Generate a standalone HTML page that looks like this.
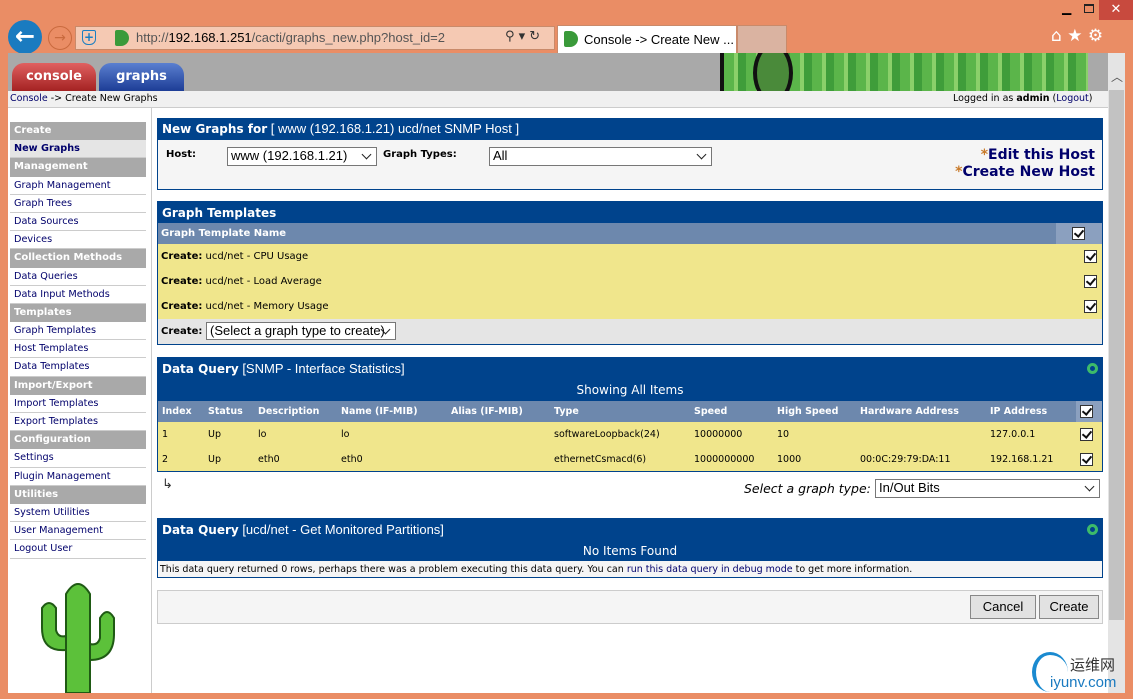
<!DOCTYPE html>
<html><head><meta charset="utf-8"><style>
*{margin:0;padding:0;box-sizing:border-box}
body{width:1133px;height:699px;overflow:hidden;background:#ea8d65;font-family:"DejaVu Sans","Liberation Sans",sans-serif;font-size:10px;color:#000;position:relative}
.a{position:absolute!important}
.t{white-space:nowrap}
.hd{background:#00438c;color:#fff;font-family:"Liberation Sans",sans-serif;font-size:13px;padding:3px 4px}
.hd b{font-family:"DejaVu Sans",sans-serif;font-size:12px}
.sb div{height:18.2px;line-height:18px;padding-left:4px;border-bottom:1px solid #ccc;color:#00006b;font-size:9.7px}
.sb .h{background:#a9a9a9;color:#fff;font-weight:bold;border-bottom:none;font-size:10px}
.cb{width:13px;height:13px;border:1px solid #333;background:#fff;position:relative}
.cb:after{content:"";position:absolute;left:3px;top:0px;width:4px;height:7px;border-right:2px solid #111;border-bottom:2px solid #111;transform:rotate(40deg)}
.sel{background:#fff;border:1px solid #777;font-family:"Liberation Sans",sans-serif;font-size:13px;padding-left:3px;line-height:16px}
.sel:after{content:"";position:absolute;right:6px;top:3px;width:6px;height:6px;border-right:1.5px solid #222;border-bottom:1.5px solid #222;transform:rotate(45deg)}
table{border-collapse:collapse;width:100%}
td{padding:0 4px;font-size:9.5px;white-space:nowrap}
</style></head><body>
<div class="a t" style="left:1062px;top:1px;font-size:12px">▁</div>
<div class="a" style="left:1084px;top:4px;width:10px;height:9px;border:1.5px solid #222;border-top-width:2px"></div>
<div class="a" style="left:1099px;top:0;width:34px;height:20px;background:#c84a3e;color:#fff;text-align:center;font-size:13px;line-height:19px">✕</div>
<div class="a" style="left:8px;top:20px;width:34px;height:34px;border-radius:50%;background:#1a7bc0;color:#fff;font-size:24px;line-height:32px;text-align:center;font-weight:bold">←</div>
<div class="a" style="left:48px;top:26px;width:24px;height:24px;border-radius:50%;border:1px solid #c96a3e;color:#c96a3e;font-size:14px;line-height:22px;text-align:center">→</div>
<div class="a" style="left:75px;top:26px;width:480px;height:24px;background:#f5c9b3;border:1px solid #c98a6a"></div>
<div class="a" style="left:82px;top:30px;width:14px;height:15px;border:1.5px solid #1b7fc2;border-radius:2px 2px 6px 6px;color:#1b7fc2;font-size:12px;line-height:12px;text-align:center;font-weight:bold">+</div>
<div class="a" style="left:115px;top:30px;width:14px;height:16px;background:#3a9a3a;border-radius:2px 8px 8px 2px"></div>
<div class="a t" style="left:136px;top:30px;font-family:'Liberation Sans',sans-serif;font-size:13px;color:#555">http://<span style="color:#000">192.168.1.251</span>/cacti/graphs_new.php?host_id=2</div>
<div class="a t" style="left:505px;top:29px;font-size:13px;color:#333">⚲ ▾ ↻</div>
<div class="a" style="left:557px;top:25px;width:180px;height:28px;background:#fff;border:1px solid #c98a6a;border-bottom:none"></div>
<div class="a" style="left:564px;top:31px;width:14px;height:16px;background:#3a9a3a;border-radius:2px 8px 8px 2px"></div>
<div class="a t" style="left:584px;top:32px;font-family:'Liberation Sans',sans-serif;font-size:13px">Console -&gt; Create New ...&nbsp; <span style="color:#888">✕</span></div>
<div class="a" style="left:737px;top:25px;width:50px;height:28px;background:#dab3a1;border:1px solid #c98a6a;border-bottom:none"></div>
<div class="a t" style="left:1051px;top:26px;font-size:17px;color:#fff">⌂ ★ ⚙</div>
<div class="a" style="left:8px;top:53px;width:1100px;height:640px;background:#fff"></div>
<div class="a" style="left:8px;top:53px;width:1100px;height:38px;background:#a9a9a9;overflow:hidden">
 <div class="a" style="left:712px;top:-20px;width:398px;height:80px;background:repeating-linear-gradient(90deg,#5bb54a 0 10px,#8bd06a 10px 14px,#3f9d3a 14px 22px);border-left:4px solid #111"></div>
 <div class="a" style="left:745px;top:-10px;width:40px;height:60px;border:4px solid #111;border-radius:50%;background:#4a8a3a"></div>
 <div class="a" style="left:1080px;top:0;width:20px;height:38px;background:#a9a9a9"></div>
</div>
<div class="a" style="left:12px;top:63px;width:84px;height:28px;border-radius:12px 12px 0 0;background:linear-gradient(#e06060,#a42222);color:#fff;font-weight:bold;font-size:13px;text-align:center;line-height:28px">console</div>
<div class="a" style="left:99px;top:63px;width:85px;height:28px;border-radius:12px 12px 0 0;background:linear-gradient(#5a7fd0,#1d3d96);color:#fff;font-weight:bold;font-size:13px;text-align:center;line-height:28px">graphs</div>
<div class="a" style="left:1108px;top:53px;width:17px;height:640px;background:#e4e4e4"></div>
<div class="a" style="left:1109px;top:90px;width:15px;height:530px;background:#c2c2c2"></div>
<div class="a" style="left:1111px;top:68px;font-size:12px;color:#555">︿</div>
<div class="a" style="left:8px;top:91px;width:1100px;height:17px;background:#f0f0f0;border-bottom:1px solid #ccc"></div>
<div class="a t" style="left:10px;top:93px;font-size:9.5px"><span style="color:#00006b">Console</span> -&gt; Create New Graphs</div>
<div class="a t" style="left:953px;top:93px;font-size:9.5px">Logged in as <b>admin</b> (<span style="color:#00006b">Logout</span>)</div>
<div class="a" style="left:151px;top:108px;width:1px;height:585px;background:#ccc"></div>
<div class="a sb" style="left:10px;top:122px;width:136px">
<div class="h">Create</div><div style="background:#e5e5e5;font-weight:bold">New Graphs</div>
<div class="h">Management</div><div>Graph Management</div><div>Graph Trees</div><div>Data Sources</div><div>Devices</div>
<div class="h">Collection Methods</div><div>Data Queries</div><div>Data Input Methods</div>
<div class="h">Templates</div><div>Graph Templates</div><div>Host Templates</div><div>Data Templates</div>
<div class="h">Import/Export</div><div>Import Templates</div><div>Export Templates</div>
<div class="h">Configuration</div><div>Settings</div><div>Plugin Management</div>
<div class="h">Utilities</div><div>System Utilities</div><div>User Management</div><div>Logout User</div>
</div>
<svg class="a" style="left:38px;top:578px" width="82" height="115" viewBox="0 0 82 115">
<g fill="#5cc13a" stroke="#1f5a14" stroke-width="2">
<path d="M28 115 V16 Q40 -4 52 16 V115Z"/>
<path d="M28 72 Q4 74 4 50 V30 Q11 20 18 30 V52 Q20 60 28 58Z"/>
<path d="M52 82 Q76 82 76 56 V40 Q69 28 62 40 V60 Q60 68 52 66Z"/>
</g></svg>
<div class="a" style="left:157px;top:118px;width:946px;height:72px;border:1px solid #00438c;background:#f5f5f5">
 <div class="hd t" style="height:21px;padding-top:2px"><b>New Graphs for</b> [ www (192.168.1.21) ucd/net SNMP Host ]</div>
 <div class="a t" style="left:8px;top:30px;font-weight:bold">Host:</div>
 <div class="a sel" style="left:69px;top:28px;width:150px;height:19px">www (192.168.1.21)</div>
 <div class="a t" style="left:225px;top:30px;font-weight:bold">Graph Types:</div>
 <div class="a sel" style="left:331px;top:28px;width:223px;height:19px">All</div>
 <div class="a t" style="right:7px;top:28px;font-size:14px;font-weight:bold;color:#00006b;text-align:right;line-height:17px"><span style="color:#c87a2a">*</span>Edit this Host<br><span style="color:#c87a2a">*</span>Create New Host</div>
</div>
<div class="a" style="left:157px;top:201px;width:946px;height:144px;border:1px solid #00438c;background:#e5e5e5">
 <div class="hd t" style="height:21px"><b>Graph Templates</b></div>
 <div style="height:21px;background:#6d88ad;color:#fff;font-weight:bold;line-height:21px;padding-left:3px;position:relative">Graph Template Name<div class="a" style="right:0;top:0;width:46px;height:21px;background:#8ba0bf"></div><div class="a cb" style="right:17px;top:4px"></div></div>
 <div style="background:#f0e68c;height:75px;position:relative">
  <div class="a t" style="left:3px;top:7px"><b>Create:</b> ucd/net - CPU Usage</div>
  <div class="a t" style="left:3px;top:32px"><b>Create:</b> ucd/net - Load Average</div>
  <div class="a t" style="left:3px;top:57px"><b>Create:</b> ucd/net - Memory Usage</div>
  <div class="a cb" style="right:5px;top:6px"></div><div class="a cb" style="right:5px;top:31px"></div><div class="a cb" style="right:5px;top:56px"></div>
 </div>
 <div class="a t" style="left:3px;top:124px;font-weight:bold">Create:</div>
 <div class="a sel" style="left:48px;top:120px;width:190px;height:18px">(Select a graph type to create)</div>
</div>
<div class="a" style="left:157px;top:357px;width:946px;height:115px;border:1px solid #00438c;background:#f0e68c">
 <div class="hd t" style="height:22px"><b>Data Query</b> [SNMP - Interface Statistics]</div>
 <div class="a" style="right:4px;top:5px;width:11px;height:11px;border-radius:50%;border:3px solid #3dbb6a"></div>
 <div style="background:#00438c;color:#fff;height:21px;text-align:center;font-size:12px;line-height:21px">Showing All Items</div>
 <table>
 <tr style="background:#6d88ad;color:#fff;font-weight:bold;height:21px"><td style="width:46px">Index</td><td style="width:50px">Status</td><td style="width:83px">Description</td><td style="width:110px">Name (IF-MIB)</td><td style="width:103px">Alias (IF-MIB)</td><td style="width:140px">Type</td><td style="width:83px">Speed</td><td style="width:83px">High Speed</td><td style="width:130px">Hardware Address</td><td>IP Address</td><td style="width:26px;background:#8ba0bf"><div class="cb"></div></td></tr>
 <tr style="height:25px"><td>1</td><td>Up</td><td>lo</td><td>lo</td><td></td><td>softwareLoopback(24)</td><td>10000000</td><td>10</td><td></td><td>127.0.0.1</td><td><div class="cb"></div></td></tr>
 <tr style="height:25px"><td>2</td><td>Up</td><td>eth0</td><td>eth0</td><td></td><td>ethernetCsmacd(6)</td><td>1000000000</td><td>1000</td><td>00:0C:29:79:DA:11</td><td>192.168.1.21</td><td><div class="cb"></div></td></tr>
 </table>
</div>
<div class="a t" style="left:162px;top:477px;font-size:13px;color:#333">↳</div>
<div class="a t" style="left:744px;top:481px;font-size:12.5px;font-style:italic">Select a graph type:</div>
<div class="a sel" style="left:875px;top:479px;width:225px;height:19px">In/Out Bits</div>
<div class="a" style="left:157px;top:518px;width:946px;height:60px;border:1px solid #00438c;background:#f5f5f5">
 <div class="hd t" style="height:22px"><b>Data Query</b> [ucd/net - Get Monitored Partitions]</div>
 <div class="a" style="right:4px;top:5px;width:11px;height:11px;border-radius:50%;border:3px solid #3dbb6a"></div>
 <div style="background:#00438c;color:#fff;height:20px;text-align:center;font-size:12px;line-height:20px">No Items Found</div>
 <div class="t" style="padding:3px 2px;font-size:9.5px">This data query returned 0 rows, perhaps there was a problem executing this data query. You can <span style="color:#00006b">run this data query in debug mode</span> to get more information.</div>
</div>
<div class="a" style="left:157px;top:590px;width:946px;height:34px;border:1px solid #ccc;background:#f5f5f5">
 <div class="a" style="left:812px;top:4px;width:66px;height:24px;border:1px solid #888;background:#e2e2e2;font-family:'Liberation Sans',sans-serif;font-size:13px;text-align:center;line-height:22px">Cancel</div>
 <div class="a" style="left:881px;top:4px;width:60px;height:24px;border:1px solid #888;background:#e2e2e2;font-family:'Liberation Sans',sans-serif;font-size:13px;text-align:center;line-height:22px">Create</div>
</div>
<div class="a" style="left:1032px;top:652px;width:36px;height:40px;border-radius:50%;border-left:4px solid #1a8ad0;border-top:3px solid #1a8ad0"></div>
<div class="a t" style="left:1070px;top:654px;font-family:'Noto Sans CJK SC',sans-serif;font-size:15px;color:#333">运维网</div>
<div class="a t" style="left:1050px;top:674px;font-family:'Liberation Sans',sans-serif;font-size:15px;color:#1a7ac0">iyunv.com</div>
</body></html>
